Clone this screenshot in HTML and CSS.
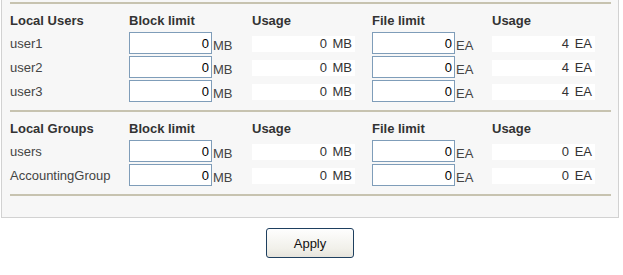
FILE: index.html
```html
<!DOCTYPE html>
<html lang="en">
<head>
    <meta charset="UTF-8">
    <title>Quota</title>
    <link rel="stylesheet" href="styles.css">
</head>
<body>
    <div class="panel">
        <!-- Local users -->
        <div class="section">
            <div class="grid head">
                <span>Local Users</span>
                <span>Block limit</span>
                <span>Usage</span>
                <span>File limit</span>
                <span>Usage</span>
            </div>
            <div class="grid row">
                <span class="name">user1</span>
                <span class="cell"><input class="limit" type="text" value="0"><span class="unit">MB</span></span>
                <span class="cell"><span class="used">0 <span class="unit">MB</span></span></span>
                <span class="cell"><input class="limit" type="text" value="0"><span class="unit">EA</span></span>
                <span class="cell"><span class="used">4 <span class="unit">EA</span></span></span>
            </div>
            <div class="grid row">
                <span class="name">user2</span>
                <span class="cell"><input class="limit" type="text" value="0"><span class="unit">MB</span></span>
                <span class="cell"><span class="used">0 <span class="unit">MB</span></span></span>
                <span class="cell"><input class="limit" type="text" value="0"><span class="unit">EA</span></span>
                <span class="cell"><span class="used">4 <span class="unit">EA</span></span></span>
            </div>
            <div class="grid row">
                <span class="name">user3</span>
                <span class="cell"><input class="limit" type="text" value="0"><span class="unit">MB</span></span>
                <span class="cell"><span class="used">0 <span class="unit">MB</span></span></span>
                <span class="cell"><input class="limit" type="text" value="0"><span class="unit">EA</span></span>
                <span class="cell"><span class="used">4 <span class="unit">EA</span></span></span>
            </div>
        </div>

        <!-- Local groups -->
        <div class="section">
            <div class="grid head">
                <span>Local Groups</span>
                <span>Block limit</span>
                <span>Usage</span>
                <span>File limit</span>
                <span>Usage</span>
            </div>
            <div class="grid row">
                <span class="name">users</span>
                <span class="cell"><input class="limit" type="text" value="0"><span class="unit">MB</span></span>
                <span class="cell"><span class="used">0 <span class="unit">MB</span></span></span>
                <span class="cell"><input class="limit" type="text" value="0"><span class="unit">EA</span></span>
                <span class="cell"><span class="used">0 <span class="unit">EA</span></span></span>
            </div>
            <div class="grid row">
                <span class="name">AccountingGroup</span>
                <span class="cell"><input class="limit" type="text" value="0"><span class="unit">MB</span></span>
                <span class="cell"><span class="used">0 <span class="unit">MB</span></span></span>
                <span class="cell"><input class="limit" type="text" value="0"><span class="unit">EA</span></span>
                <span class="cell"><span class="used">0 <span class="unit">EA</span></span></span>
            </div>
        </div>

        <div class="section last"></div>
    </div>

    <div class="actions">
        <button class="btn" type="button">Apply</button>
    </div>
</body>
</html>
```

FILE: styles.css
```css
/* Reset */
* {
    box-sizing: border-box;
    margin: 0;
    padding: 0;
}

body {
    font-family: "Liberation Sans", Arial, sans-serif;
    font-size: 13px;
    color: #444;
    background: #fff;
}

/* Panel */
.panel {
    width: 618px;
    margin-left: 1px;
    padding: 2px 7px 0 8px;
    background: #f7f7f7;
    border: 1px solid #d2d2d2;
    border-top: none;
    height: 218px;
}

.section {
    border-top: 2px solid #c7c3b0;
    padding: 9px 0 6px;
}

.section.last {
    padding: 0;
}

/* Grid rows */
.grid {
    display: grid;
    grid-template-columns: 119px 123px 120px 120px 1fr;
}

.head {
    font-weight: bold;
    color: #333;
    line-height: 16px;
    margin-bottom: 3px;
}

.row {
    height: 24px;
    align-items: center;
    line-height: 16px;
}

.cell {
    display: flex;
    align-items: center;
    height: 24px;
}

.limit {
    width: 83px;
    height: 22px;
    margin-bottom: 2px;
    border: 1px solid #7f9db9;
    background: #fff;
    font-family: "Liberation Sans", Arial, sans-serif;
    font-size: 13px;
    color: #000;
    text-align: right;
    padding: 0 2px;
    outline: none;
}

.unit {
    padding-top: 4px;
    margin-left: 1px;
}

.used {
    display: block;
    width: 103px;
    height: 16px;
    line-height: 16px;
    background: #fff;
    text-align: right;
    padding-right: 3px;
    color: #333;
}

.used .unit {
    padding-top: 0;
    margin-left: 2px;
}

/* Apply button */
.actions {
    text-align: center;
    padding: 10px 3px 0 0;
}

.btn {
    width: 88px;
    height: 30px;
    font-family: "Liberation Sans", Arial, sans-serif;
    font-size: 13px;
    color: #111;
    background: linear-gradient(#fefefe, #f1f0ea 70%, #e6e4dc);
    border: 1px solid #1e3f5f;
    border-radius: 3px;
    cursor: pointer;
}
```
